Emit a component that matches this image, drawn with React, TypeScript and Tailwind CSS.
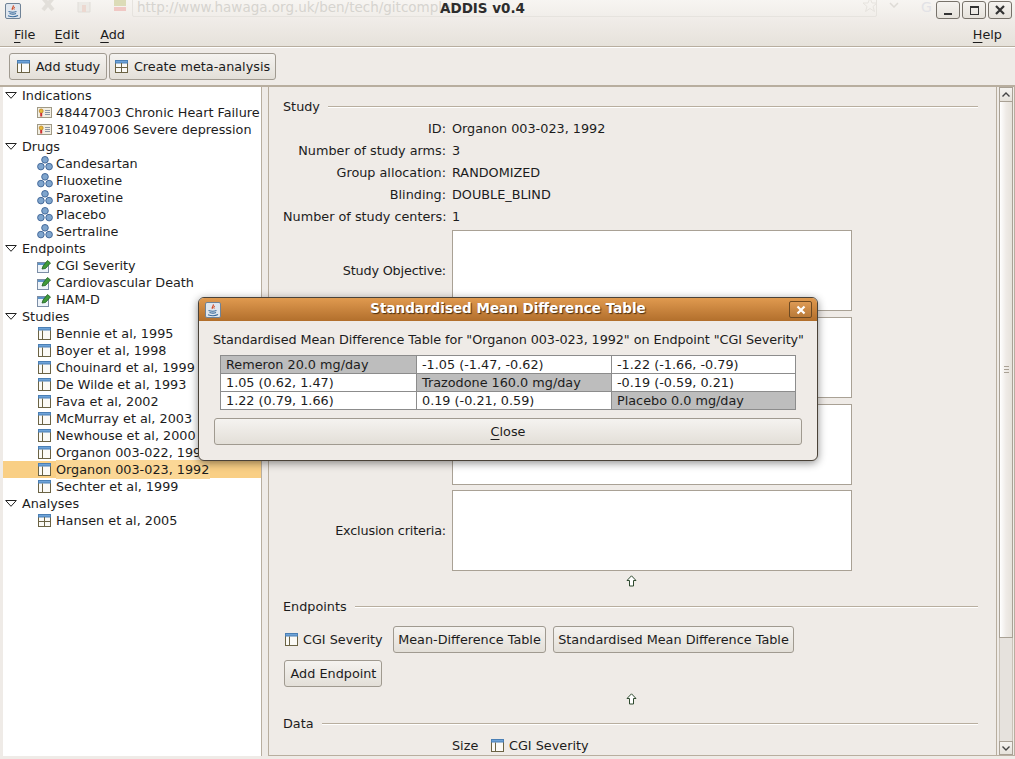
import React from "react";

const TableIcon = ({ alt }: { alt?: boolean }) => (
  <svg width="13" height="13" viewBox="0 0 13 13" className="shrink-0">
    <rect x="0.5" y="0.5" width="12" height="12" fill="#fbfaf6" stroke="#6b6344" />
    <rect x="0.5" y="0.5" width="12" height="2.5" fill="#6ea3d8" stroke="#4a7fb5" />
    <path d={alt ? "M6.5 3v9M1 7.5h11" : "M4.5 3.5v9"} stroke="#6b6344" fill="none" />
  </svg>
);

const DrugIcon = () => (
  <svg width="16" height="15" viewBox="0 0 16 15" className="shrink-0">
    <g fill="#7fa5cd" stroke="#44699a" strokeWidth="1">
      <circle cx="8" cy="3.8" r="3.3" />
      <circle cx="3.9" cy="10.6" r="3.3" />
      <circle cx="12.1" cy="10.6" r="3.3" />
    </g>
  </svg>
);

const CardIcon = () => (
  <svg width="15" height="11" viewBox="0 0 15 11" className="shrink-0">
    <rect x="0.5" y="0.5" width="14" height="10" fill="#f2eee2" stroke="#a09a86" />
    <circle cx="4.2" cy="4" r="2" fill="#e8b93a" stroke="#b27a1a" strokeWidth="0.7" />
    <path d="M4.2 6v3.5" stroke="#cc2f2f" strokeWidth="2" />
    <path d="M8 3.5h5M8 5.5h5M8 7.5h5" stroke="#8d97a4" />
  </svg>
);

const EndpointIcon = () => (
  <svg width="15" height="14" viewBox="0 0 15 14" className="shrink-0">
    <rect x="0.5" y="3.5" width="11" height="10" fill="#eef4fa" stroke="#7c8ea6" />
    <rect x="1" y="4" width="10" height="2" fill="#5e94c8" />
    <path d="M5 10l1-3 4.500-5.500 3 2.500-5 5.500z" fill="#3f9a3a" stroke="#1f5f20" strokeWidth="0.8" />
  </svg>
);

const Triangle = () => (
  <svg width="12" height="7" viewBox="0 0 12 7" className="shrink-0">
    <path d="M0.7 0.5h10.6L6 6.3z" fill="#fff" stroke="#222" />
  </svg>
);

const JavaIcon = () => (
  <svg width="16" height="16" viewBox="0 0 16 16" className="shrink-0">
    <rect x="0.5" y="0.5" width="15" height="15" rx="1.5" fill="#dfe6ee" stroke="#6f8296" />
    <path d="M8 2.500c1.500 1.500-1.800 2.600-.6 4.400" stroke="#d2461f" strokeWidth="1.2" fill="none" />
    <path d="M10 4c-1.200.8-1.500 1.400-.8 2.600" stroke="#d2461f" fill="none" />
    <path d="M3.500 8.500c2.500.8 6 .8 8 0M4.500 10.500c2 .7 5 .7 6.500 0M3 12.800c3 1 7.500 1 10-.3" stroke="#3c6d9e" strokeWidth="1.1" fill="none" />
  </svg>
);

const UpArrow = () => (
  <svg width="11" height="12" viewBox="0 0 11 12">
    <path d="M5.500 0.800L10 5.500H7.500V11h-4V5.500H1z" fill="#fff" stroke="#2f4a2f" />
  </svg>
);

const Tree = ({ children }: { children: React.ReactNode }) => (
  <div className="flex h-[17px] items-center pl-[2px]">
    <Triangle />
    <span className="ml-[5px]">{children}</span>
  </div>
);

const Leaf = ({ icon, children, selected }: { icon: React.ReactNode; children: React.ReactNode; selected?: boolean }) => (
  <div className={`flex h-[17px] items-center ${selected ? "bg-[#f9cf85]" : ""}`}>
    <span className="ml-[34px] flex w-[15px] justify-center">{icon}</span>
    <span className={`ml-[4px] whitespace-nowrap ${selected ? "bg-[#fbd796] pr-[1px]" : ""}`}>{children}</span>
  </div>
);

const Btn = ({ className, children }: { className: string; children: React.ReactNode }) => (
  <div className={`flex h-[27px] items-center justify-center whitespace-nowrap rounded-[3px] border border-[#a09a90] bg-gradient-to-b from-[#f5f3f0] to-[#e3dfd8] ${className}`}>
    {children}
  </div>
);

const Section = ({ title }: { title: string }) => (
  <div className="flex items-center gap-[8px] pr-[18px]">
    <span>{title}</span>
    <div className="h-[2px] flex-1 border-b border-t border-b-white border-t-[#b8ae9f]" />
  </div>
);

const Row = ({ label, value }: { label: string; value: string }) => (
  <div className="flex h-[22px] items-center">
    <span className="w-[163px] whitespace-nowrap text-right">{label}</span>
    <span className="ml-[6px]">{value}</span>
  </div>
);

const Area = ({ label, className }: { label: string; className?: string }) => (
  <div className={`flex h-[81px] items-center ${className ?? ""}`}>
    <span className="w-[163px] whitespace-nowrap text-right tracking-[-0.17px]">{label}</span>
    <div className="ml-[6px] h-[81px] w-[400px] border border-[#a9a195] bg-white" />
  </div>
);

const WinBtn = ({ children }: { children: React.ReactNode }) => (
  <div className="flex h-[18px] w-[24px] items-center justify-center rounded-[3px] border border-[#77726a] bg-gradient-to-b from-[#f5f3f0] to-[#e6e2db]">{children}</div>
);

const Ghost = ({ className, children }: { className: string; children: React.ReactNode }) => (
  <div className={`absolute ${className}`}>{children}</div>
);

export default function App() {
  const u = "underline underline-offset-[3px]";
  return (
    <div className="relative flex h-[759px] w-[1015px] flex-col overflow-hidden bg-[#efebe7] font-['DejaVu_Sans',sans-serif] text-[12.8px] text-[#1c1c1c]">
      {/* title bar */}
      <div className="relative flex h-[22px] shrink-0 items-center justify-center overflow-hidden bg-gradient-to-b from-[#f7f5f2] to-[#efebe7]">
        <Ghost className="left-[132px] top-[-4px] h-[21px] w-[745px] rounded-[2px] border border-[#e6e3de]"><span /></Ghost>
        <Ghost className="left-[40px] top-[-2px]">
          <svg width="16" height="14" viewBox="0 0 16 14"><path d="M3 0l10 12M13 0L3 12" stroke="#e2dfda" strokeWidth="4" /></svg>
        </Ghost>
        <Ghost className="left-[75px] top-[-2px]">
          <svg width="18" height="16" viewBox="0 0 18 16"><path d="M3 4v10h12V4" fill="#eceae6" stroke="#e0ddd8" /><path d="M7 7h4v7H7z" fill="#ecd8d0" /></svg>
        </Ghost>
        <Ghost className="left-[111px] top-[-1px]">
          <svg width="18" height="14" viewBox="0 0 18 14"><rect x="3" y="0" width="12" height="7" fill="#dcdcb8" /><rect x="3" y="8" width="12" height="4" fill="#f0c8c4" /></svg>
        </Ghost>
        <Ghost className="left-[862px] top-[-3px]">
          <svg width="16" height="16" viewBox="0 0 16 16"><path d="M8 1l2 5h5l-4 3.500 1.500 5L8 11.500 3.500 14.500 5 9.500 1 6h5z" fill="none" stroke="#e6e3de" /></svg>
        </Ghost>
        <Ghost className="left-[889px] top-[2px]">
          <svg width="10" height="6" viewBox="0 0 10 6"><path d="M1 1l4 4 4-4" fill="none" stroke="#dedbd6" strokeWidth="1.500" /></svg>
        </Ghost>
        <div className="absolute left-[5px] top-[3px]"><JavaIcon /></div>
        <span className="absolute left-[137px] top-[-3px] whitespace-nowrap text-[13.5px] text-[#d6d4cf]">http://www.hawaga.org.uk/ben/tech/gitcomplet</span>
        <span className="absolute left-[921px] top-[-3px] whitespace-nowrap text-[14px] text-[#e2e2e6]">G</span>
        <span className="relative -top-[3px] left-[-25px] text-[13.5px] font-bold text-[#2d2d2d]">ADDIS v0.4</span>
        <div className="absolute right-[3px] top-[1px] flex gap-[2px]">
          <WinBtn><span className="mt-[8px] h-[2px] w-[8px] bg-[#333]" /></WinBtn>
          <WinBtn><span className="h-[9px] w-[9px] border border-t-2 border-[#333]" /></WinBtn>
          <WinBtn>
            <svg width="10" height="10" viewBox="0 0 10 10"><path d="M1 1l8 8M9 1l-8 8" stroke="#333" strokeWidth="2.2" /></svg>
          </WinBtn>
        </div>
      </div>
      {/* menu bar */}
      <div className="flex h-[25px] shrink-0 items-center justify-between border-b border-b-[#b8ae9f] bg-gradient-to-b from-[#efebe7] to-[#e6e2db] pl-[14px] pr-[13px] pt-[1px] shadow-[0_1px_0_#fff]">
        <div className="flex gap-[19px]">
          <span><span className={u}>F</span>ile</span>
          <span><span className={u}>E</span>dit</span>
          <span className="ml-[2px]"><span className={u}>A</span>dd</span>
        </div>
        <span><span className={u}>H</span>elp</span>
      </div>
      {/* toolbar */}
      <div className="flex h-[38px] shrink-0 items-center gap-[2px] pl-[9px] pt-[1px]">
        <Btn className="w-[98px] gap-[6px] pl-[1px]"><TableIcon />Add study</Btn>
        <Btn className="w-[167px] gap-[6px]"><TableIcon alt />Create meta-analysis</Btn>
      </div>
      {/* main */}
      <div className="flex min-h-0 flex-1 border-t-2 border-t-[#b8ae9f] pb-[3px] pl-[3px]">
        <div className="w-[259px] shrink-0 border-r border-r-[#b8ae9f] bg-white">
          <Tree>Indications</Tree>
          <Leaf icon={<CardIcon />}>48447003 Chronic Heart Failure</Leaf>
          <Leaf icon={<CardIcon />}>310497006 Severe depression</Leaf>
          <Tree>Drugs</Tree>
          {["Candesartan", "Fluoxetine", "Paroxetine", "Placebo", "Sertraline"].map((d) => (
            <Leaf key={d} icon={<DrugIcon />}>{d}</Leaf>
          ))}
          <Tree>Endpoints</Tree>
          {["CGI Severity", "Cardiovascular Death", "HAM-D"].map((d) => (
            <Leaf key={d} icon={<EndpointIcon />}>{d}</Leaf>
          ))}
          <Tree>Studies</Tree>
          {[
            "Bennie et al, 1995",
            "Boyer et al, 1998",
            "Chouinard et al, 1999",
            "De Wilde et al, 1993",
            "Fava et al, 2002",
            "McMurray et al, 2003",
            "Newhouse et al, 2000",
            "Organon 003-022, 1998",
            "Organon 003-023, 1992",
            "Sechter et al, 1999",
          ].map((d) => (
            <Leaf key={d} icon={<TableIcon />} selected={d === "Organon 003-023, 1992"}>{d}</Leaf>
          ))}
          <Tree>Analyses</Tree>
          <Leaf icon={<TableIcon alt />}>Hansen et al, 2005</Leaf>
        </div>
        <div className="w-[6px] shrink-0" />
        <div className="flex min-w-0 flex-1 border-x border-b border-x-[#b8ae9f] border-b-[#b8ae9f]">
          <div className="h-full flex-1 overflow-hidden pl-[14px] pt-[10px]">
            <Section title="Study" />
            <div className="mt-[1px]">
              <Row label="ID:" value="Organon 003-023, 1992" />
              <Row label="Number of study arms:" value="3" />
              <Row label="Group allocation:" value="RANDOMIZED" />
              <Row label="Blinding:" value="DOUBLE_BLIND" />
              <Row label="Number of study centers:" value="1" />
            </div>
            <div className="mt-[3px] flex flex-col">
              <Area label="Study Objective:" />
              <Area label="Indication:" className="mt-[6px]" />
              <Area label="Inclusion criteria:" className="mt-[6px]" />
              <Area label="Exclusion criteria:" className="mt-[5px]" />
            </div>
            <div className="mt-[4px] flex justify-center pr-[17px]"><UpArrow /></div>
            <div className="mt-[10px]"><Section title="Endpoints" /></div>
            <div className="mt-[10px] flex items-center pl-[2px]">
              <TableIcon />
              <span className="ml-[5px] w-[90px] whitespace-nowrap">CGI Severity</span>
              <Btn className="w-[153px]">Mean-Difference Table</Btn>
              <Btn className="ml-[7px] w-[241px]">Standardised Mean Difference Table</Btn>
            </div>
            <Btn className="ml-[1px] mt-[7px] w-[98px] pl-[1px]">Add Endpoint</Btn>
            <div className="mt-[6px] flex justify-center pr-[17px]"><UpArrow /></div>
            <div className="mt-[9px]"><Section title="Data" /></div>
            <div className="mt-[1px] flex h-[22px] items-center pl-[169px]">
              <span className="w-[39px]">Size</span>
              <TableIcon />
              <span className="ml-[5px]">CGI Severity</span>
            </div>
          </div>
          {/* scrollbar */}
          <div className="flex w-[18px] shrink-0 flex-col border-l border-l-[#b8ae9f] bg-[#efebe7] pl-[2px] pr-[1px]">
            <div className="flex h-[15px] shrink-0 items-center justify-center border border-[#a9a195] bg-gradient-to-b from-[#f5f3f0] to-[#e6e2db]">
              <svg width="8" height="5" viewBox="0 0 8 5"><path d="M0.500 4.500L4 1l3.500 3.500" stroke="#444" strokeWidth="1.400" fill="none" /></svg>
            </div>
            <div className="flex h-[536px] shrink-0 flex-col items-center justify-center gap-[2px] border-x border-b border-[#a9a195] bg-gradient-to-r from-white via-[#efebe7] to-[#e6e2db]">
              <div className="h-px w-[5px] bg-[#a9a195]" />
              <div className="h-px w-[5px] bg-[#a9a195]" />
              <div className="h-px w-[5px] bg-[#a9a195]" />
            </div>
            <div className="flex-1 border-x border-[#c9c2b7] bg-[#e6e2dd]" />
            <div className="flex h-[14px] shrink-0 items-center justify-center border border-[#a9a195] bg-gradient-to-b from-[#f5f3f0] to-[#e6e2db]">
              <svg width="8" height="5" viewBox="0 0 8 5"><path d="M0.500 0.500L4 4l3.500-3.500" stroke="#444" strokeWidth="1.400" fill="none" /></svg>
            </div>
          </div>
        </div>
      </div>

      {/* dialog */}
      <div className="absolute left-[198px] top-[297px] flex h-[164px] w-[620px] flex-col overflow-hidden rounded-[6px] border border-[#4a4238] bg-[#efebe7] shadow-[0_2px_8px_rgba(0,0,0,0.45)]">
        <div className="relative flex h-[23px] shrink-0 items-center justify-center bg-gradient-to-b from-[#e09a4f] to-[#b26f2c] pb-[2px]">
          <div className="absolute left-[6px] top-[4px]"><JavaIcon /></div>
          <span className="text-[13.5px] font-bold text-white [text-shadow:1px_1px_1px_#4a2e10]">Standardised Mean Difference Table</span>
          <div className="absolute right-[5px] top-[3px] flex h-[17px] w-[23px] items-center justify-center rounded-[2px] border border-[#6e4a22] bg-gradient-to-b from-[#dd9a55] to-[#b97a38]">
            <svg width="10" height="10" viewBox="0 0 10 10"><path d="M1.500 1.500l7 7M8.500 1.500l-7 7" stroke="#fff" strokeWidth="2.200" /></svg>
          </div>
        </div>
        <div className="whitespace-nowrap pl-[14px] pt-[9px] tracking-[-0.08px]">Standardised Mean Difference Table for "Organon 003-023, 1992" on Endpoint "CGI Severity"</div>
        <div className="ml-[21px] mt-[6px] grid w-[576px] grid-cols-[196px_195px_1fr] border-l border-t border-[#8c8c8c]">
          {[
            ["Remeron 20.0 mg/day", "-1.05 (-1.47, -0.62)", "-1.22 (-1.66, -0.79)"],
            ["1.05 (0.62, 1.47)", "Trazodone 160.0 mg/day", "-0.19 (-0.59, 0.21)"],
            ["1.22 (0.79, 1.66)", "0.19 (-0.21, 0.59)", "Placebo 0.0 mg/day"],
          ].map((r, i) =>
            r.map((c, j) => (
              <div key={c} className={`flex h-[18px] items-center border-b border-r border-[#8c8c8c] pl-[5px] ${i === j ? "bg-[#bdbdbd]" : "bg-white"}`}>{c}</div>
            ))
          )}
        </div>
        <Btn className="ml-[15px] mt-[8px] w-[588px]"><span><span className={u}>C</span>lose</span></Btn>
      </div>
    </div>
  );
}
